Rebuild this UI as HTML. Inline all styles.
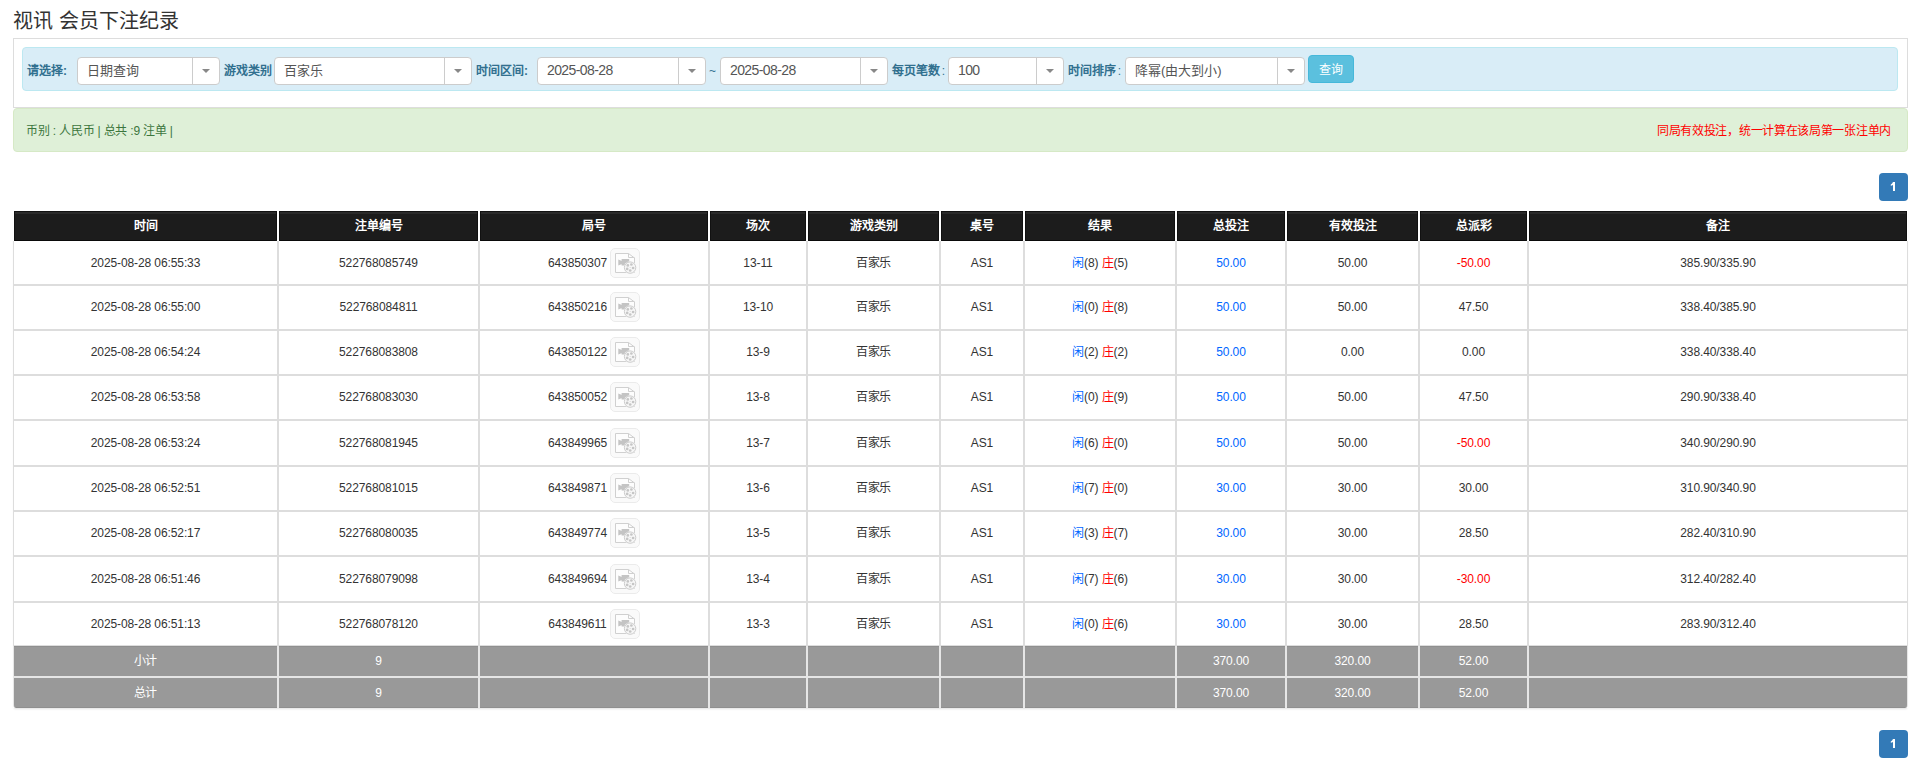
<!DOCTYPE html>
<html lang="zh-CN"><head><meta charset="utf-8">
<style>
*{box-sizing:border-box}
html,body{margin:0;padding:0;background:#fff}
body{font-family:"Liberation Sans",sans-serif;font-size:12px;color:#333;width:1919px;height:776px;overflow:hidden;position:relative}
.abs{position:absolute}
.title{left:13px;top:7px;font-size:20px;line-height:28px;color:#333;white-space:nowrap}
.panel{left:13px;top:38px;width:1895px;height:70px;border:1px solid #ddd;background:#fff}
.ainfo{left:22px;top:47px;width:1876px;height:44px;border:1px solid #bce8f1;background:#d9edf7;border-radius:4px}
.lbl{top:63px;line-height:16px;font-size:12px;font-weight:bold;color:#31708f;white-space:nowrap}
.tilde{left:709px;top:62.5px;line-height:16px;color:#31708f}
.sel{top:57px;height:28px;border:1px solid #ccc;border-radius:4px;background:#fff;font-size:13px;line-height:26px;padding-left:9px;color:#555;white-space:nowrap}
.sel .dg{font-size:14px;letter-spacing:-0.6px;position:relative;top:-1px}
.sel .sc{font-size:13px;position:relative;top:0px}
.sel .dv{position:absolute;right:26px;top:-1px;bottom:-1px;width:1px;background:#ccc}
.sel .ar{position:absolute;right:9px;top:11px;width:0;height:0;border-left:4px solid transparent;border-right:4px solid transparent;border-top:4px solid #888}
.btn{left:1308px;top:55px;width:46px;height:28px;background:#5bc0de;border:1px solid #46b8da;border-radius:4px;color:#fff;text-align:center;line-height:28px;font-size:12px}
.asucc{left:13px;top:108px;width:1895px;height:44px;border:1px solid #d6e9c6;background:#dff0d8;border-radius:4px;color:#3c763d}
.asucc .l{position:absolute;left:12px;top:13.5px;line-height:16px;letter-spacing:-0.2px}
.asucc .rr{position:absolute;right:16px;top:14px;line-height:16px;color:#f00;letter-spacing:-0.3px}
.pg{left:1879px;width:29px;height:28px;background:#337ab7;border-radius:4px;color:#fff;font-weight:bold;text-align:center;line-height:28px;font-size:12px}
table.t{position:absolute;left:13px;top:210px;width:1895px;border-collapse:separate;border-spacing:0;table-layout:fixed}
.t th,.t td{border:1px solid #ddd;text-align:center;padding:0;line-height:14px;white-space:nowrap;letter-spacing:-0.1px}
.t th{background:linear-gradient(#111 0,#111 1px,#2a2a2a 1px,#2a2a2a 3px,#1c1c1c 3px,#1c1c1c calc(100% - 1px),#0a0a0a calc(100% - 1px));box-shadow:inset 1px 0 #111,inset -1px 0 #111;color:#fff;font-weight:bold;height:31px;border-color:#fff;border-bottom:0;letter-spacing:0;padding-bottom:0}
.t td{height:auto}
.t td{padding-bottom:1px}
.t tr.first td{border-top:0;padding-bottom:0}
.t tr.tot td{background:#999;color:#fff;font-weight:normal;height:31px;border-color:#e6e6e6;padding-bottom:0}
.t tr.t1 td{border-top:0;background:linear-gradient(#8f8f8f 0,#8f8f8f 1px,#999 1px)}
.t tr.t2 td{border-bottom:0;background:linear-gradient(#999 0,#999 calc(100% - 1px),#8f8f8f calc(100% - 1px))}
.t tr.t2 td:last-child{border-bottom-right-radius:3px}
.t tr.t2 td:first-child{border-bottom-left-radius:3px}
table.t{box-shadow:0 2px 2px -1px rgba(0,0,0,.12)}
.b{color:#0066ff} .r{color:#f00} .bl{color:#0066ff} .neg{color:#f00}
.ic{display:inline-block;vertical-align:middle;margin-left:3px}
.jh .jn{vertical-align:middle}

</style></head><body>
<div class="abs title">视讯 会员下注纪录</div>
<div class="abs panel"></div>
<div class="abs ainfo"></div>
<div class="abs lbl" style="left:27px">请选择:</div>
<div class="abs sel" style="left:77px;width:143px"><span class="sc">日期查询</span><span class="dv"></span><span class="ar"></span></div>
<div class="abs lbl" style="left:224px">游戏类别</div>
<div class="abs sel" style="left:274px;width:198px"><span class="sc">百家乐</span><span class="dv"></span><span class="ar"></span></div>
<div class="abs lbl" style="left:476px">时间区间:</div>
<div class="abs sel" style="left:537px;width:169px"><span class="dg">2025-08-28</span><span class="dv"></span><span class="ar"></span></div>
<div class="abs tilde">~</div>
<div class="abs sel" style="left:720px;width:168px"><span class="dg">2025-08-28</span><span class="dv"></span><span class="ar"></span></div>
<div class="abs lbl" style="left:892px">每页笔数<span style="margin-left:-1.5px;font-weight:normal"> :</span></div>
<div class="abs sel" style="left:948px;width:116px"><span class="dg">100</span><span class="dv"></span><span class="ar"></span></div>
<div class="abs lbl" style="left:1068px">时间排序<span style="margin-left:-1.5px;font-weight:normal"> :</span></div>
<div class="abs sel" style="left:1125px;width:180px"><span class="sc">降幂(由大到小)</span><span class="dv"></span><span class="ar"></span></div>
<div class="abs btn">查询</div>
<div class="abs asucc"><span class="l">币别 : 人民币 | 总共 :9 注单 |</span><span class="rr">同局有效投注，统一计算在该局第一张注单内</span></div>
<div class="abs pg" style="top:173px"><svg width="29" height="28" viewBox="0 0 29 28" style="display:block"><path d="M14 9H16V18H14V11.9Q13 12.5 11.8 12.8V11.4Q13.3 10.6 14 9Z" fill="#fff"/></svg></div>
<table class="t">
<colgroup><col style="width:265px"><col style="width:201px"><col style="width:230px"><col style="width:98px"><col style="width:133px"><col style="width:84px"><col style="width:152px"><col style="width:110px"><col style="width:133px"><col style="width:109px"><col style="width:380px"></colgroup>
<tr class="hd"><th>时间</th><th>注单编号</th><th>局号</th><th>场次</th><th>游戏类别</th><th>桌号</th><th>结果</th><th>总投注</th><th>有效投注</th><th>总派彩</th><th>备注</th></tr>
<tr class="first" style="height:44px"><td>2025-08-28 06:55:33</td><td>522768085749</td><td class="jh"><span class="jn">643850307</span><svg class="ic" width="30" height="30" viewBox="0 0 30 30"><rect x="0.5" y="0.5" width="29" height="29" rx="4.5" fill="#fafafa" stroke="#ebebeb"/><path d="M5.5 5.5H18.5L24.5 10V24.5H5.5Z" fill="#fdfdfd" stroke="#d0d0d0"/><path d="M18.5 5.5V9.5H24.5" fill="none" stroke="#d0d0d0"/><path d="M8.3 11.6L11.8 13V16L8.3 17.4Z M11.6 11.1H19.2V17.6H11.6Z" fill="#c4c4c4"/><circle cx="20.1" cy="19.6" r="6.3" fill="#fdfdfd"/><circle cx="20.1" cy="19.6" r="5.7" fill="#f7f7f7" stroke="#cccccc"/><circle cx="17.8" cy="17.4" r="1.35" fill="#c6c6c6"/><circle cx="21.4" cy="16.5" r="1.35" fill="#c6c6c6"/><circle cx="23.1" cy="20.0" r="1.35" fill="#c6c6c6"/><circle cx="20.2" cy="22.5" r="1.35" fill="#c6c6c6"/><circle cx="17.2" cy="20.9" r="1.35" fill="#c6c6c6"/><circle cx="20.1" cy="19.6" r="0.5" fill="#cfcfcf"/></svg></td><td>13-11</td><td class="cj">百家乐</td><td>AS1</td><td><span class="b cj">闲</span>(8) <span class="r cj">庄</span>(5)</td><td class="bl">50.00</td><td>50.00</td><td class="neg">-50.00</td><td>385.90/335.90</td></tr>
<tr style="height:45px"><td>2025-08-28 06:55:00</td><td>522768084811</td><td class="jh"><span class="jn">643850216</span><svg class="ic" width="30" height="30" viewBox="0 0 30 30"><rect x="0.5" y="0.5" width="29" height="29" rx="4.5" fill="#fafafa" stroke="#ebebeb"/><path d="M5.5 5.5H18.5L24.5 10V24.5H5.5Z" fill="#fdfdfd" stroke="#d0d0d0"/><path d="M18.5 5.5V9.5H24.5" fill="none" stroke="#d0d0d0"/><path d="M8.3 11.6L11.8 13V16L8.3 17.4Z M11.6 11.1H19.2V17.6H11.6Z" fill="#c4c4c4"/><circle cx="20.1" cy="19.6" r="6.3" fill="#fdfdfd"/><circle cx="20.1" cy="19.6" r="5.7" fill="#f7f7f7" stroke="#cccccc"/><circle cx="17.8" cy="17.4" r="1.35" fill="#c6c6c6"/><circle cx="21.4" cy="16.5" r="1.35" fill="#c6c6c6"/><circle cx="23.1" cy="20.0" r="1.35" fill="#c6c6c6"/><circle cx="20.2" cy="22.5" r="1.35" fill="#c6c6c6"/><circle cx="17.2" cy="20.9" r="1.35" fill="#c6c6c6"/><circle cx="20.1" cy="19.6" r="0.5" fill="#cfcfcf"/></svg></td><td>13-10</td><td class="cj">百家乐</td><td>AS1</td><td><span class="b cj">闲</span>(0) <span class="r cj">庄</span>(8)</td><td class="bl">50.00</td><td>50.00</td><td>47.50</td><td>338.40/385.90</td></tr>
<tr style="height:45px"><td>2025-08-28 06:54:24</td><td>522768083808</td><td class="jh"><span class="jn">643850122</span><svg class="ic" width="30" height="30" viewBox="0 0 30 30"><rect x="0.5" y="0.5" width="29" height="29" rx="4.5" fill="#fafafa" stroke="#ebebeb"/><path d="M5.5 5.5H18.5L24.5 10V24.5H5.5Z" fill="#fdfdfd" stroke="#d0d0d0"/><path d="M18.5 5.5V9.5H24.5" fill="none" stroke="#d0d0d0"/><path d="M8.3 11.6L11.8 13V16L8.3 17.4Z M11.6 11.1H19.2V17.6H11.6Z" fill="#c4c4c4"/><circle cx="20.1" cy="19.6" r="6.3" fill="#fdfdfd"/><circle cx="20.1" cy="19.6" r="5.7" fill="#f7f7f7" stroke="#cccccc"/><circle cx="17.8" cy="17.4" r="1.35" fill="#c6c6c6"/><circle cx="21.4" cy="16.5" r="1.35" fill="#c6c6c6"/><circle cx="23.1" cy="20.0" r="1.35" fill="#c6c6c6"/><circle cx="20.2" cy="22.5" r="1.35" fill="#c6c6c6"/><circle cx="17.2" cy="20.9" r="1.35" fill="#c6c6c6"/><circle cx="20.1" cy="19.6" r="0.5" fill="#cfcfcf"/></svg></td><td>13-9</td><td class="cj">百家乐</td><td>AS1</td><td><span class="b cj">闲</span>(2) <span class="r cj">庄</span>(2)</td><td class="bl">50.00</td><td>0.00</td><td>0.00</td><td>338.40/338.40</td></tr>
<tr style="height:45px"><td>2025-08-28 06:53:58</td><td>522768083030</td><td class="jh"><span class="jn">643850052</span><svg class="ic" width="30" height="30" viewBox="0 0 30 30"><rect x="0.5" y="0.5" width="29" height="29" rx="4.5" fill="#fafafa" stroke="#ebebeb"/><path d="M5.5 5.5H18.5L24.5 10V24.5H5.5Z" fill="#fdfdfd" stroke="#d0d0d0"/><path d="M18.5 5.5V9.5H24.5" fill="none" stroke="#d0d0d0"/><path d="M8.3 11.6L11.8 13V16L8.3 17.4Z M11.6 11.1H19.2V17.6H11.6Z" fill="#c4c4c4"/><circle cx="20.1" cy="19.6" r="6.3" fill="#fdfdfd"/><circle cx="20.1" cy="19.6" r="5.7" fill="#f7f7f7" stroke="#cccccc"/><circle cx="17.8" cy="17.4" r="1.35" fill="#c6c6c6"/><circle cx="21.4" cy="16.5" r="1.35" fill="#c6c6c6"/><circle cx="23.1" cy="20.0" r="1.35" fill="#c6c6c6"/><circle cx="20.2" cy="22.5" r="1.35" fill="#c6c6c6"/><circle cx="17.2" cy="20.9" r="1.35" fill="#c6c6c6"/><circle cx="20.1" cy="19.6" r="0.5" fill="#cfcfcf"/></svg></td><td>13-8</td><td class="cj">百家乐</td><td>AS1</td><td><span class="b cj">闲</span>(0) <span class="r cj">庄</span>(9)</td><td class="bl">50.00</td><td>50.00</td><td>47.50</td><td>290.90/338.40</td></tr>
<tr style="height:46px"><td>2025-08-28 06:53:24</td><td>522768081945</td><td class="jh"><span class="jn">643849965</span><svg class="ic" width="30" height="30" viewBox="0 0 30 30"><rect x="0.5" y="0.5" width="29" height="29" rx="4.5" fill="#fafafa" stroke="#ebebeb"/><path d="M5.5 5.5H18.5L24.5 10V24.5H5.5Z" fill="#fdfdfd" stroke="#d0d0d0"/><path d="M18.5 5.5V9.5H24.5" fill="none" stroke="#d0d0d0"/><path d="M8.3 11.6L11.8 13V16L8.3 17.4Z M11.6 11.1H19.2V17.6H11.6Z" fill="#c4c4c4"/><circle cx="20.1" cy="19.6" r="6.3" fill="#fdfdfd"/><circle cx="20.1" cy="19.6" r="5.7" fill="#f7f7f7" stroke="#cccccc"/><circle cx="17.8" cy="17.4" r="1.35" fill="#c6c6c6"/><circle cx="21.4" cy="16.5" r="1.35" fill="#c6c6c6"/><circle cx="23.1" cy="20.0" r="1.35" fill="#c6c6c6"/><circle cx="20.2" cy="22.5" r="1.35" fill="#c6c6c6"/><circle cx="17.2" cy="20.9" r="1.35" fill="#c6c6c6"/><circle cx="20.1" cy="19.6" r="0.5" fill="#cfcfcf"/></svg></td><td>13-7</td><td class="cj">百家乐</td><td>AS1</td><td><span class="b cj">闲</span>(6) <span class="r cj">庄</span>(0)</td><td class="bl">50.00</td><td>50.00</td><td class="neg">-50.00</td><td>340.90/290.90</td></tr>
<tr style="height:45px"><td>2025-08-28 06:52:51</td><td>522768081015</td><td class="jh"><span class="jn">643849871</span><svg class="ic" width="30" height="30" viewBox="0 0 30 30"><rect x="0.5" y="0.5" width="29" height="29" rx="4.5" fill="#fafafa" stroke="#ebebeb"/><path d="M5.5 5.5H18.5L24.5 10V24.5H5.5Z" fill="#fdfdfd" stroke="#d0d0d0"/><path d="M18.5 5.5V9.5H24.5" fill="none" stroke="#d0d0d0"/><path d="M8.3 11.6L11.8 13V16L8.3 17.4Z M11.6 11.1H19.2V17.6H11.6Z" fill="#c4c4c4"/><circle cx="20.1" cy="19.6" r="6.3" fill="#fdfdfd"/><circle cx="20.1" cy="19.6" r="5.7" fill="#f7f7f7" stroke="#cccccc"/><circle cx="17.8" cy="17.4" r="1.35" fill="#c6c6c6"/><circle cx="21.4" cy="16.5" r="1.35" fill="#c6c6c6"/><circle cx="23.1" cy="20.0" r="1.35" fill="#c6c6c6"/><circle cx="20.2" cy="22.5" r="1.35" fill="#c6c6c6"/><circle cx="17.2" cy="20.9" r="1.35" fill="#c6c6c6"/><circle cx="20.1" cy="19.6" r="0.5" fill="#cfcfcf"/></svg></td><td>13-6</td><td class="cj">百家乐</td><td>AS1</td><td><span class="b cj">闲</span>(7) <span class="r cj">庄</span>(0)</td><td class="bl">30.00</td><td>30.00</td><td>30.00</td><td>310.90/340.90</td></tr>
<tr style="height:45px"><td>2025-08-28 06:52:17</td><td>522768080035</td><td class="jh"><span class="jn">643849774</span><svg class="ic" width="30" height="30" viewBox="0 0 30 30"><rect x="0.5" y="0.5" width="29" height="29" rx="4.5" fill="#fafafa" stroke="#ebebeb"/><path d="M5.5 5.5H18.5L24.5 10V24.5H5.5Z" fill="#fdfdfd" stroke="#d0d0d0"/><path d="M18.5 5.5V9.5H24.5" fill="none" stroke="#d0d0d0"/><path d="M8.3 11.6L11.8 13V16L8.3 17.4Z M11.6 11.1H19.2V17.6H11.6Z" fill="#c4c4c4"/><circle cx="20.1" cy="19.6" r="6.3" fill="#fdfdfd"/><circle cx="20.1" cy="19.6" r="5.7" fill="#f7f7f7" stroke="#cccccc"/><circle cx="17.8" cy="17.4" r="1.35" fill="#c6c6c6"/><circle cx="21.4" cy="16.5" r="1.35" fill="#c6c6c6"/><circle cx="23.1" cy="20.0" r="1.35" fill="#c6c6c6"/><circle cx="20.2" cy="22.5" r="1.35" fill="#c6c6c6"/><circle cx="17.2" cy="20.9" r="1.35" fill="#c6c6c6"/><circle cx="20.1" cy="19.6" r="0.5" fill="#cfcfcf"/></svg></td><td>13-5</td><td class="cj">百家乐</td><td>AS1</td><td><span class="b cj">闲</span>(3) <span class="r cj">庄</span>(7)</td><td class="bl">30.00</td><td>30.00</td><td>28.50</td><td>282.40/310.90</td></tr>
<tr style="height:46px"><td>2025-08-28 06:51:46</td><td>522768079098</td><td class="jh"><span class="jn">643849694</span><svg class="ic" width="30" height="30" viewBox="0 0 30 30"><rect x="0.5" y="0.5" width="29" height="29" rx="4.5" fill="#fafafa" stroke="#ebebeb"/><path d="M5.5 5.5H18.5L24.5 10V24.5H5.5Z" fill="#fdfdfd" stroke="#d0d0d0"/><path d="M18.5 5.5V9.5H24.5" fill="none" stroke="#d0d0d0"/><path d="M8.3 11.6L11.8 13V16L8.3 17.4Z M11.6 11.1H19.2V17.6H11.6Z" fill="#c4c4c4"/><circle cx="20.1" cy="19.6" r="6.3" fill="#fdfdfd"/><circle cx="20.1" cy="19.6" r="5.7" fill="#f7f7f7" stroke="#cccccc"/><circle cx="17.8" cy="17.4" r="1.35" fill="#c6c6c6"/><circle cx="21.4" cy="16.5" r="1.35" fill="#c6c6c6"/><circle cx="23.1" cy="20.0" r="1.35" fill="#c6c6c6"/><circle cx="20.2" cy="22.5" r="1.35" fill="#c6c6c6"/><circle cx="17.2" cy="20.9" r="1.35" fill="#c6c6c6"/><circle cx="20.1" cy="19.6" r="0.5" fill="#cfcfcf"/></svg></td><td>13-4</td><td class="cj">百家乐</td><td>AS1</td><td><span class="b cj">闲</span>(7) <span class="r cj">庄</span>(6)</td><td class="bl">30.00</td><td>30.00</td><td class="neg">-30.00</td><td>312.40/282.40</td></tr>
<tr style="height:44px"><td>2025-08-28 06:51:13</td><td>522768078120</td><td class="jh"><span class="jn">643849611</span><svg class="ic" width="30" height="30" viewBox="0 0 30 30"><rect x="0.5" y="0.5" width="29" height="29" rx="4.5" fill="#fafafa" stroke="#ebebeb"/><path d="M5.5 5.5H18.5L24.5 10V24.5H5.5Z" fill="#fdfdfd" stroke="#d0d0d0"/><path d="M18.5 5.5V9.5H24.5" fill="none" stroke="#d0d0d0"/><path d="M8.3 11.6L11.8 13V16L8.3 17.4Z M11.6 11.1H19.2V17.6H11.6Z" fill="#c4c4c4"/><circle cx="20.1" cy="19.6" r="6.3" fill="#fdfdfd"/><circle cx="20.1" cy="19.6" r="5.7" fill="#f7f7f7" stroke="#cccccc"/><circle cx="17.8" cy="17.4" r="1.35" fill="#c6c6c6"/><circle cx="21.4" cy="16.5" r="1.35" fill="#c6c6c6"/><circle cx="23.1" cy="20.0" r="1.35" fill="#c6c6c6"/><circle cx="20.2" cy="22.5" r="1.35" fill="#c6c6c6"/><circle cx="17.2" cy="20.9" r="1.35" fill="#c6c6c6"/><circle cx="20.1" cy="19.6" r="0.5" fill="#cfcfcf"/></svg></td><td>13-3</td><td class="cj">百家乐</td><td>AS1</td><td><span class="b cj">闲</span>(0) <span class="r cj">庄</span>(6)</td><td class="bl">30.00</td><td>30.00</td><td>28.50</td><td>283.90/312.40</td></tr>
<tr class="tot t1"><td class="cj">小计</td><td>9</td><td></td><td></td><td></td><td></td><td></td><td>370.00</td><td>320.00</td><td>52.00</td><td></td></tr>
<tr class="tot t2"><td class="cj">总计</td><td>9</td><td></td><td></td><td></td><td></td><td></td><td>370.00</td><td>320.00</td><td>52.00</td><td></td></tr>
</table>
<div class="abs pg" style="top:730px"><svg width="29" height="28" viewBox="0 0 29 28" style="display:block"><path d="M14 9H16V18H14V11.9Q13 12.5 11.8 12.8V11.4Q13.3 10.6 14 9Z" fill="#fff"/></svg></div>
</body></html>
